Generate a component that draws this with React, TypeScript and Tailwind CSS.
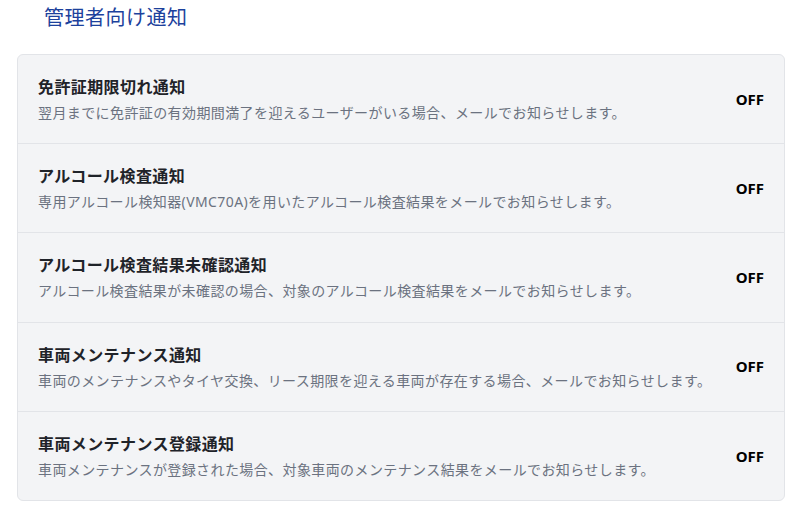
const notifications = [
  {
    title: "免許証期限切れ通知",
    description: "翌月までに免許証の有効期間満了を迎えるユーザーがいる場合、メールでお知らせします。",
  },
  {
    title: "アルコール検査通知",
    description: "専用アルコール検知器(VMC70A)を用いたアルコール検査結果をメールでお知らせします。",
  },
  {
    title: "アルコール検査結果未確認通知",
    description: "アルコール検査結果が未確認の場合、対象のアルコール検査結果をメールでお知らせします。",
  },
  {
    title: "車両メンテナンス通知",
    description: "車両のメンテナンスやタイヤ交換、リース期限を迎える車両が存在する場合、メールでお知らせします。",
  },
  {
    title: "車両メンテナンス登録通知",
    description: "車両メンテナンスが登録された場合、対象車両のメンテナンス結果をメールでお知らせします。",
  },
];

const App = () => {
  return (
    <div
      className="min-h-screen bg-white pl-[17px] pr-[15px] pt-1 pb-3"
      style={{ fontFamily: '"Noto Sans", "Noto Sans CJK JP", sans-serif' }}
    >
      <h2 className="pl-[27px] text-xl leading-7 tracking-wide text-[#1c419c] mb-[22px]">管理者向け通知</h2>
      <div className="rounded-md border border-[#e2e4e8] bg-[#f3f4f6]">
        {notifications.map((item, index) => (
          <div
            key={index}
            className={`flex items-center justify-between px-5 py-[20.1px] ${index > 0 ? "border-t border-[#e2e4e8]" : ""}`}
          >
            <div className="tracking-wide">
              <h3 className="text-base leading-6 font-bold text-[#1f2329]">{item.title}</h3>
              <p className="mt-1 text-sm leading-5 text-[#6b7280]">{item.description}</p>
            </div>
            <span className="text-[15px] font-bold text-black">OFF</span>
          </div>
        ))}
      </div>
    </div>
  );
};

export default App;
